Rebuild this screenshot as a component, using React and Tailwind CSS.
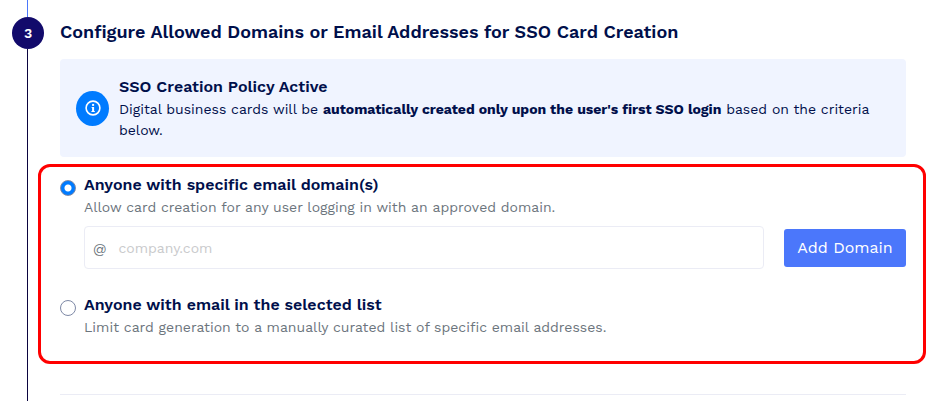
import { useState } from "react";

function StepRail({ number }) {
  return (
    <div className="flex w-8 shrink-0 flex-col">
      <div className="ml-[15px] h-[17px] w-px bg-[#4b77fb]" />
      <div className="flex size-8 items-center justify-center rounded-full bg-[#120a6b] text-sm font-semibold text-white">
        {number}
      </div>
      <div className="ml-[15px] w-px flex-1 bg-[#0b0540]" />
    </div>
  );
}

function InfoIcon() {
  return (
    <svg width="16" height="16" viewBox="0 0 16 16" fill="none" aria-hidden="true">
      <circle cx="8" cy="8" r="6.9" stroke="white" strokeWidth="1.6" />
      <rect x="7.1" y="3.9" width="2" height="2" fill="white" />
      <path d="M6.5 6.9h2.6v4.2h.7v1H6.4v-1h.7V7.8h-.6z" fill="white" />
    </svg>
  );
}

function PolicyNotice() {
  return (
    <div className="flex items-center rounded bg-[#f0f4ff] p-4">
      <div className="flex h-[35px] w-[33px] shrink-0 items-center justify-center rounded-[50%] bg-[#007bff]">
        <InfoIcon />
      </div>
      <div className="ml-2.5 min-w-0 flex-1">
        <h3 className="text-base leading-6 font-semibold">SSO Creation Policy Active</h3>
        <p className="text-sm leading-[21px]">
          Digital business cards will be{" "}
          <strong className="font-bold">
            automatically created only upon the user's first SSO login
          </strong>{" "}
          based on the criteria below.
        </p>
      </div>
    </div>
  );
}

function PolicyOption({ id, title, description, checked, onChange, children }) {
  return (
    <div className="flex gap-2">
      <input
        type="radio"
        name="policy"
        id={id}
        checked={checked}
        onChange={onChange}
        className="mt-[7px] size-4 shrink-0 appearance-none rounded-full border border-[#7e89a6] bg-white checked:bg-[radial-gradient(circle,white_3px,#007bff_4px)]"
      />
      <div className="min-w-0 flex-1">
        <label htmlFor={id} className="block text-base leading-6 font-semibold">
          {title}
        </label>
        <p className="text-sm leading-[21px] text-[#6c757d]">{description}</p>
        {children}
      </div>
    </div>
  );
}

export default function App() {
  const [policy, setPolicy] = useState("domain");
  const [domain, setDomain] = useState("");

  return (
    <main className="flex min-h-screen gap-4 bg-white pr-[38px] pl-3 font-['Work_Sans','Inter',sans-serif] text-[#000f4b]">
      <StepRail number={3} />

      <section className="min-w-0 flex-1 pb-1.5">
        <h2 className="pt-[18px] pb-[14px] text-lg leading-[27px] font-semibold">
          Configure Allowed Domains or Email Addresses for SSO Card Creation
        </h2>

        <PolicyNotice />

        <div className="-mr-5 -ml-[22px] mt-[7px] flex flex-col gap-6 rounded-xl border-3 border-[#ff0000] pt-1.5 pr-[17px] pb-[23px] pl-[19px]">
          <PolicyOption
            id="policy-domain"
            title="Anyone with specific email domain(s)"
            description="Allow card creation for any user logging in with an approved domain."
            checked={policy === "domain"}
            onChange={() => setPolicy("domain")}
          >
            <div className="mt-2 flex items-center gap-5">
              <div className="flex h-[43px] min-w-0 flex-1 items-center gap-3 rounded border border-[#ebecf5] px-2 text-sm">
                <span className="text-[#6c757d]">@</span>
                <input
                  type="text"
                  aria-label="Domain"
                  placeholder="company.com"
                  value={domain}
                  onChange={(e) => setDomain(e.target.value)}
                  className="min-w-0 flex-1 outline-none placeholder:text-[#c9cacc]"
                />
              </div>
              <button
                type="button"
                className="h-[38px] w-[122px] shrink-0 rounded-[3px] bg-[#4b77fb] text-base text-white"
              >
                Add Domain
              </button>
            </div>
          </PolicyOption>

          <PolicyOption
            id="policy-list"
            title="Anyone with email in the selected list"
            description="Limit card generation to a manually curated list of specific email addresses."
            checked={policy === "list"}
            onChange={() => setPolicy("list")}
          />
        </div>

        <hr className="mt-[30px] border-[#ebecf5]" />
      </section>
    </main>
  );
}
